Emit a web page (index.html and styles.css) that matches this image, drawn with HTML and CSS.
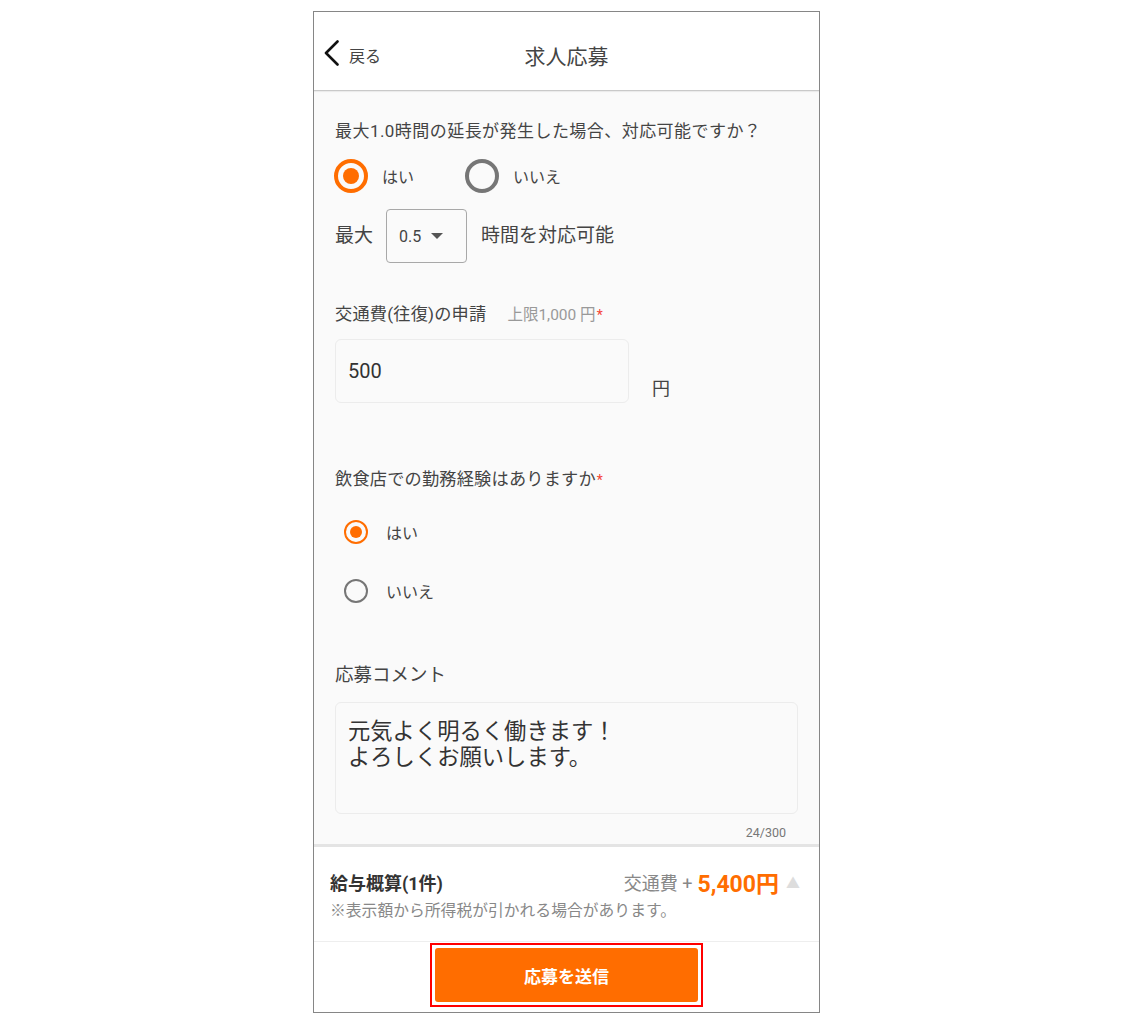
FILE: index.html
```html
<!DOCTYPE html>
<html lang="ja">
<head>
<meta charset="utf-8">
<title>求人応募</title>
<link rel="stylesheet" href="styles.css">
</head>
<body>
<div class="frame">
  <header class="header">
    <div class="back">
      <svg class="chev" width="16" height="26" viewBox="0 0 16 26"><polyline points="13.5,1.5 2,13 13.5,24.5" fill="none" stroke="#111" stroke-width="2.6" stroke-linecap="round" stroke-linejoin="round"/></svg>
      <span class="back-text">戻る</span>
    </div>
    <h1 class="title">求人応募</h1>
    <div></div>
  </header>

  <main class="content">
    <p class="question">最大1.0時間の延長が発生した場合、対応可能ですか？</p>
    <div class="radio-row">
      <label class="radio-big"><span class="rb on"></span><span class="rl">はい</span></label>
      <label class="radio-big"><span class="rb"></span><span class="rl">いいえ</span></label>
    </div>
    <div class="select-row">
      <span class="sr-text">最大</span>
      <div class="select"><span class="sel-val">0.5</span><span class="caret"></span></div>
      <span class="sr-text">時間を対応可能</span>
    </div>

    <div class="label label-transport">交通費(往復)の申請<span class="limit">上限1,000 円<span class="req">*</span></span></div>
    <div class="input-row">
      <div class="input">500</div>
      <span class="yen">円</span>
    </div>

    <div class="label label-exp">飲食店での勤務経験はありますか<span class="req">*</span></div>
    <ul class="radio-list">
      <li class="rli"><span class="rs on"></span><span class="rl">はい</span></li>
      <li class="rli"><span class="rs"></span><span class="rl">いいえ</span></li>
    </ul>

    <div class="label label-comment">応募コメント</div>
    <div class="textarea">元気よく明るく働きます！<br>よろしくお願いします。</div>
    <div class="counter">24/300</div>
  </main>

  <footer class="footer">
    <div class="summary">
      <span class="sum-title">給与概算(1件)</span>
      <span class="sum-right"><span class="fare">交通費 +</span><span class="amount">5,400円</span><span class="tri">▲</span></span>
    </div>
    <p class="note">※表示額から所得税が引かれる場合があります。</p>
    <div class="btn-area">
      <div class="btn-outline"><button class="submit">応募を送信</button></div>
    </div>
  </footer>
</div>
</body>
</html>
```

FILE: styles.css
```css
* { box-sizing: border-box; }
html, body { margin: 0; padding: 0; background: #fff; }
body {
  font-family: Roboto, "Noto Sans CJK JP", sans-serif;
  color: #333;
}
.frame {
  width: 507px;
  height: 1002px;
  margin: 11px 0 0 calc(50% - 254px);
  border: 1px solid #868686;
  display: flex;
  flex-direction: column;
  overflow: hidden;
}
.header {
  height: 79px;
  flex: none;
  background: #fff;
  border-bottom: 1px solid #c9c9c9;
  box-shadow: 0 1px 1px rgba(0,0,0,0.06);
  display: grid;
  grid-template-columns: 1fr auto 1fr;
  align-items: center;
  position: relative;
  z-index: 1;
}
.back {
  display: flex;
  align-items: center;
  padding-left: 10px;
  padding-top: 4px;
}
.chev { display: block; }
.back-text {
  font-size: 16px;
  color: #444;
  margin-left: 9px;
  padding-top: 3px;
}
.title {
  margin: 0;
  font-size: 21px;
  font-weight: 400;
  color: #444;
  padding-top: 7px;
}
.content {
  flex: 1;
  background: #fafafa;
  padding: 28px 21px 0 21px;
  overflow: hidden;
}
.question {
  margin: 0;
  font-size: 17px;
  line-height: 24px;
  color: #444;
  letter-spacing: 0.45px;
}
.radio-row {
  display: flex;
  align-items: center;
  margin-top: 16px;
  height: 34px;
}
.radio-big {
  display: flex;
  align-items: center;
  margin-right: 52px;
}
.radio-big .rl { font-size: 16px; color: #444; margin-left: 14px; }
.rb {
  width: 34px;
  height: 34px;
  border-radius: 50%;
  border: 4px solid #767676;
  display: flex;
  align-items: center;
  justify-content: center;
  margin-left: -1px;
}
.rb.on { border-color: #ff6d00; }
.rb.on::after {
  content: "";
  width: 16px;
  height: 16px;
  border-radius: 50%;
  background: #ff6d00;
}
.select-row {
  display: flex;
  align-items: center;
  margin-top: 16px;
}
.sr-text { font-size: 19px; color: #444; line-height: 24px; padding-bottom: 1px; }
.select {
  width: 81px;
  height: 54px;
  border: 1px solid #a8a8a8;
  border-radius: 4px;
  margin: 0 14px 0 13px;
  display: flex;
  align-items: center;
  padding-left: 12px;
}
.sel-val { font-size: 16px; color: #444; }
.caret {
  width: 0;
  height: 0;
  border-left: 6px solid transparent;
  border-right: 6px solid transparent;
  border-top: 6px solid #555;
  margin-left: 10px;
}
.label {
  font-size: 17.2px;
  line-height: 24px;
  color: #444;
  letter-spacing: 0.2px;
}
.label-transport { margin-top: 39px; }
.limit {
  font-size: 15.5px;
  color: #999;
  margin-left: 21px;
  letter-spacing: 0;
}
.req { color: #f44336; font-size: 14px; margin-left: 1px; }
.input-row {
  display: flex;
  align-items: flex-end;
  margin-top: 12px;
}
.input {
  width: 294px;
  height: 64px;
  border: 1px solid #ececec;
  border-radius: 6px;
  background: #fafafa;
  font-size: 20px;
  color: #333;
  padding: 18px 0 0 12px;
  line-height: 26px;
}
.yen {
  font-size: 18px;
  color: #444;
  margin-left: 23px;
  line-height: 24px;
  margin-bottom: 2px;
}
.label-exp { margin-top: 64px; }
.radio-list {
  list-style: none;
  margin: 10px 0 0 0;
  padding: 0;
}
.rli {
  height: 59px;
  display: flex;
  align-items: center;
  padding-left: 9px;
}
.rli .rl { font-size: 16px; color: #444; margin-left: 18px; }
.rs {
  width: 24px;
  height: 24px;
  border-radius: 50%;
  border: 2.5px solid #767676;
  display: flex;
  align-items: center;
  justify-content: center;
}
.rs.on { border-color: #ff6d00; }
.rs.on::after {
  content: "";
  width: 12px;
  height: 12px;
  border-radius: 50%;
  background: #ff6d00;
}
.label-comment { margin-top: 43px; font-size: 18.5px; letter-spacing: 0; }
.textarea {
  margin-top: 15px;
  height: 112px;
  border: 1px solid #ececec;
  border-radius: 6px;
  background: #fafafa;
  font-size: 22.3px;
  line-height: 26px;
  color: #333;
  padding: 15px 0 0 12px;
}
.counter {
  text-align: right;
  font-size: 12.5px;
  line-height: 16px;
  color: #777;
  margin-top: 11px;
  padding-right: 12px;
}
.footer {
  flex: none;
  background: #fff;
  border-top: 3px solid #e4e4e4;
}
.summary {
  display: flex;
  justify-content: space-between;
  align-items: center;
  margin-top: 21px;
  padding: 0 19px 0 16px;
  height: 28px;
}
.sum-title { font-size: 18px; font-weight: 700; color: #333; }
.sum-right { display: flex; align-items: center; }
.fare { font-size: 18px; color: #888; margin-right: 5px; }
.amount { font-size: 23px; font-weight: 700; color: #ff6d00; }
.tri { font-size: 14px; color: #ddd; margin-left: 7px; }
.note {
  margin: 5px 0 0 0;
  padding-left: 16px;
  font-size: 15.8px;
  line-height: 20px;
  color: #888;
}
.btn-area {
  margin-top: 20px;
  border-top: 1px solid #eee;
  padding: 1px 0 5px 0;
  display: flex;
  justify-content: center;
}
.btn-outline {
  border: 2px solid #f00;
  padding: 3px;
}
.submit {
  display: block;
  width: 263px;
  height: 54px;
  border: 0;
  border-radius: 3px;
  background: #ff6d00;
  color: #fff;
  font-family: Roboto, "Noto Sans CJK JP", sans-serif;
  font-size: 17px;
  font-weight: 700;
  padding: 0;
}
```
